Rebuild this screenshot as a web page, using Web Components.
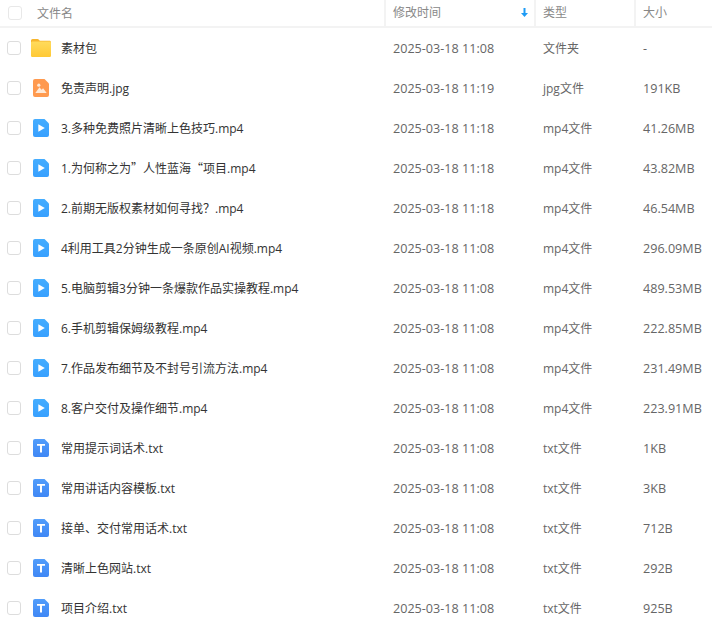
<!DOCTYPE html>
<html lang="zh">
<head>
<meta charset="utf-8">
<title>文件列表</title>
<style>
  html, body { margin: 0; background: #fff; }
  body { font-family: "Open Sans", "Noto Sans CJK SC", sans-serif; font-size: 12px; overflow: hidden; }
</style>
</head>
<body>
<file-table>
  <file-header></file-header>
  <file-row icon="folder" name="素材包" time="2025-03-18 11:08" type="文件夹" size="-"></file-row>
  <file-row icon="image" name="免责声明.jpg" time="2025-03-18 11:19" type="jpg文件" size="191KB"></file-row>
  <file-row icon="video" name="3.多种免费照片清晰上色技巧.mp4" time="2025-03-18 11:18" type="mp4文件" size="41.26MB"></file-row>
  <file-row icon="video" name="1.为何称之为”人性蓝海“项目.mp4" time="2025-03-18 11:18" type="mp4文件" size="43.82MB"></file-row>
  <file-row icon="video" name="2.前期无版权素材如何寻找？.mp4" time="2025-03-18 11:18" type="mp4文件" size="46.54MB"></file-row>
  <file-row icon="video" name="4利用工具2分钟生成一条原创AI视频.mp4" time="2025-03-18 11:08" type="mp4文件" size="296.09MB"></file-row>
  <file-row icon="video" name="5.电脑剪辑3分钟一条爆款作品实操教程.mp4" time="2025-03-18 11:08" type="mp4文件" size="489.53MB"></file-row>
  <file-row icon="video" name="6.手机剪辑保姆级教程.mp4" time="2025-03-18 11:08" type="mp4文件" size="222.85MB"></file-row>
  <file-row icon="video" name="7.作品发布细节及不封号引流方法.mp4" time="2025-03-18 11:08" type="mp4文件" size="231.49MB"></file-row>
  <file-row icon="video" name="8.客户交付及操作细节.mp4" time="2025-03-18 11:08" type="mp4文件" size="223.91MB"></file-row>
  <file-row icon="text" name="常用提示词话术.txt" time="2025-03-18 11:08" type="txt文件" size="1KB"></file-row>
  <file-row icon="text" name="常用讲话内容模板.txt" time="2025-03-18 11:08" type="txt文件" size="3KB"></file-row>
  <file-row icon="text" name="接单、交付常用话术.txt" time="2025-03-18 11:08" type="txt文件" size="712B"></file-row>
  <file-row icon="text" name="清晰上色网站.txt" time="2025-03-18 11:08" type="txt文件" size="292B"></file-row>
  <file-row icon="text" name="项目介绍.txt" time="2025-03-18 11:08" type="txt文件" size="925B"></file-row>
</file-table>

<script>
const ICONS = {
  folder: /* html */`
    <svg width="20" height="18" viewBox="0 0 20 18">
      <path d="M0 1.700C0 .8.7 0 1.600 0h4.900c.5 0 .9.2 1.200.5l1.100 1.200h9.600c.9 0 1.600.7 1.600 1.600V6H0z" fill="#f7b52c"/>
      <path d="M0 3.800C0 3 .7 2.400 1.500 2.400h17c.8 0 1.500.6 1.500 1.400v12.600c0 .9-.7 1.600-1.600 1.600H1.600C.7 18 0 17.300 0 16.400z" fill="url(#f)"/>
      <defs><linearGradient id="f" x1="0" y1="0" x2="0" y2="1"><stop offset="0" stop-color="#ffdb5c"/><stop offset="1" stop-color="#ffc935"/></linearGradient></defs>
    </svg>`,
  image: /* html */`
    <svg width="16" height="18" viewBox="0 0 16 18">
      <path d="M2 0h9.500L16 4.500V16a2 2 0 0 1-2 2H2a2 2 0 0 1-2-2V2a2 2 0 0 1 2-2z" fill="#ff9a4f"/>
      <circle cx="5.800" cy="6.200" r="1.600" fill="#ffe9d6"/>
      <path d="M2.300 14 6.500 8.200l2 2.500 1.600-1.400 3.600 4.700z" fill="#ffe9d6"/>
    </svg>`,
  video: /* html */`
    <svg width="16" height="18" viewBox="0 0 16 18">
      <defs><linearGradient id="v" x1="0" y1="0" x2="0" y2="1"><stop offset="0" stop-color="#45adff"/><stop offset="1" stop-color="#37a0ff"/></linearGradient></defs>
      <path d="M2 0h9.500L16 4.500V16a2 2 0 0 1-2 2H2a2 2 0 0 1-2-2V2a2 2 0 0 1 2-2z" fill="url(#v)"/>
      <path d="M5.300 5.300 11.800 9l-6.500 3.700z" fill="#fff"/>
    </svg>`,
  text: /* html */`
    <svg width="16" height="18" viewBox="0 0 16 18">
      <defs><linearGradient id="t" x1="0" y1="0" x2="0" y2="1"><stop offset="0" stop-color="#519dfb"/><stop offset="1" stop-color="#3f87f5"/></linearGradient></defs>
      <path d="M2 0h9.500L16 4.500V16a2 2 0 0 1-2 2H2a2 2 0 0 1-2-2V2a2 2 0 0 1 2-2z" fill="url(#t)"/>
      <path d="M4 5h8v1.700H9V13.500H7V6.700H4z" fill="#fff"/>
    </svg>`
};

class FileTable extends HTMLElement {
  constructor() {
    super();
    this.attachShadow({ mode: "open" }).innerHTML = /* html */`
      <style>
        :host { display: block; width: 712px; height: 635px; overflow: hidden; }
      </style>
      <slot></slot>`;
  }
}

class FileHeader extends HTMLElement {
  constructor() {
    super();
    this.attachShadow({ mode: "open" }).innerHTML = /* html */`
      <style>
        :host {
          display: grid;
          grid-template-columns: 384px 150px 100px 1fr;
          height: 26px;
          border-bottom: 2px solid #f3f3f3;
          color: #888;
          line-height: 25px;
        }
        .cell { padding-left: 9px; position: relative; }
        .cell + .cell { border-left: 2px solid #f3f3f3; padding-left: 7px; }
        .name { display: flex; gap: 15px; padding-left: 8px; align-items: center; }
        .box { width: 12px; height: 12px; border: 1px solid #e8e8e8; border-radius: 3px; }
        .sort { position: absolute; right: 6px; top: 8px; }
      </style>
      <div class="cell name"><span class="box"></span><span>文件名</span></div>
      <div class="cell">修改时间
        <svg class="sort" width="7" height="9" viewBox="0 0 7 9"><path d="M2.500 0h2v5h2.500L3.500 9 0 5h2.500z" fill="#1e9bf5"/></svg>
      </div>
      <div class="cell">类型</div>
      <div class="cell">大小</div>`;
  }
}

class FileRow extends HTMLElement {
  constructor() {
    super();
    this.attachShadow({ mode: "open" });
  }

  connectedCallback() {
    const get = (k) => this.getAttribute(k);
    // the quotes are full width in the reference, Open Sans would narrow them
    const name = get("name").replace(/[”“]/g, '<span class="quote">$&</span>');
    this.shadowRoot.innerHTML = /* html */`
      <style>
        :host {
          display: grid;
          grid-template-columns: 385px 150px 100px 1fr;
          height: 40px;
          align-items: center;
          color: #666;
        }
        .name { display: flex; align-items: center; padding-left: 7px; color: #333; white-space: nowrap; }
        .box { width: 12px; height: 12px; border: 1px solid #ddd; border-radius: 3px; flex: none; }
        .icon { width: 20px; margin: 0 10px; display: flex; justify-content: center; flex: none; }
        .cell { padding-left: 8px; white-space: nowrap; }
        .num { font-size: 12.6px; }
        .quote { display: inline-block; width: 12px; font-family: "Noto Sans CJK SC", sans-serif; }
      </style>
      <div class="name">
        <span class="box"></span>
        <span class="icon">${ICONS[get("icon")]}</span>
        <span>${name}</span>
      </div>
      <div class="cell num">${get("time")}</div>
      <div class="cell">${get("type")}</div>
      <div class="cell num">${get("size")}</div>`;
  }
}

customElements.define("file-table", FileTable);
customElements.define("file-header", FileHeader);
customElements.define("file-row", FileRow);
</script>
</body>
</html>
